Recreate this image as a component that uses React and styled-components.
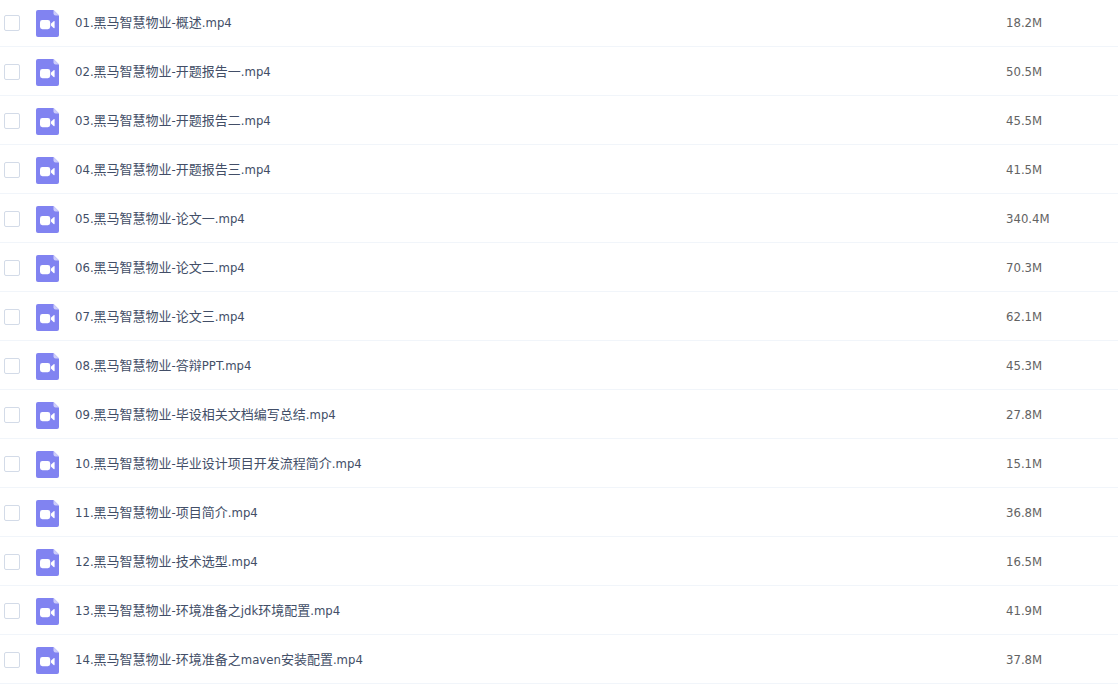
import React, { useState } from "react";
import styled, { createGlobalStyle } from "styled-components";

const GlobalStyle = createGlobalStyle`
  body {
    margin: 0;
    background: #ffffff;
    overflow-x: hidden;
    font-family: "DejaVu Sans Condensed", "Noto Sans CJK SC", sans-serif;
    font-size: 13px;
  }
`;

const Table = styled.table`
  width: 100%;
  margin-top: -2px;
  table-layout: fixed;
  border-collapse: separate;
  border-spacing: 0;
`;

const Cell = styled.td`
  box-sizing: border-box;
  width: ${(props) => props.$width || "auto"};
  height: 49px;
  padding: 2px 0 0;
  border-bottom: 1px solid #f1f5fa;
  line-height: 20px;
  vertical-align: middle;
`;

const SizeCell = styled(Cell)`
  color: #636363;
`;

const Checkbox = styled.input`
  display: block;
  appearance: none;
  box-sizing: border-box;
  width: 16px;
  height: 16px;
  margin: 0 0 0 4px;
  border: 1px solid #d3dbe8;
  border-radius: 2px;
  background: #ffffff;

  &:checked {
    border-color: #8183f1;
    background: #8183f1;
  }
`;

const FileLabel = styled.label`
  display: flex;
  align-items: center;
  gap: 16px;
  color: #424e67;
  white-space: nowrap;
`;

const Icon = styled.svg`
  flex: none;
  width: 23px;
  height: 27px;
  margin-top: 1px;
`;

const files = [
  { name: "01.黑马智慧物业-概述.mp4", size: "18.2M" },
  { name: "02.黑马智慧物业-开题报告一.mp4", size: "50.5M" },
  { name: "03.黑马智慧物业-开题报告二.mp4", size: "45.5M" },
  { name: "04.黑马智慧物业-开题报告三.mp4", size: "41.5M" },
  { name: "05.黑马智慧物业-论文一.mp4", size: "340.4M" },
  { name: "06.黑马智慧物业-论文二.mp4", size: "70.3M" },
  { name: "07.黑马智慧物业-论文三.mp4", size: "62.1M" },
  { name: "08.黑马智慧物业-答辩PPT.mp4", size: "45.3M" },
  { name: "09.黑马智慧物业-毕设相关文档编写总结.mp4", size: "27.8M" },
  { name: "10.黑马智慧物业-毕业设计项目开发流程简介.mp4", size: "15.1M" },
  { name: "11.黑马智慧物业-项目简介.mp4", size: "36.8M" },
  { name: "12.黑马智慧物业-技术选型.mp4", size: "16.5M" },
  { name: "13.黑马智慧物业-环境准备之jdk环境配置.mp4", size: "41.9M" },
  { name: "14.黑马智慧物业-环境准备之maven安装配置.mp4", size: "37.8M" },
];

const VideoIcon = () => (
  <Icon viewBox="0 0 23 27" aria-hidden="true">
    <path
      d="M2 0H17.5L23 5.5V25a2 2 0 0 1-2 2H2a2 2 0 0 1-2-2V2a2 2 0 0 1 2-2Z"
      fill="#8183f1"
    />
    <path d="M17.5 0L23 5.5H19.5a2 2 0 0 1-2-2Z" fill="#cdcdfa" />
    <rect x="4" y="10" width="10.2" height="9.2" rx="2.4" fill="#ffffff" />
    <path
      d="M14.9 13.8L17.6 11.2Q18.6 10.4 18.6 11.6V17.6Q18.6 18.8 17.6 18L14.9 15.4Z"
      fill="#ffffff"
    />
  </Icon>
);

const FileRow = ({ id, file, checked, onToggle }) => (
  <tr>
    <Cell $width="36px">
      <Checkbox id={id} type="checkbox" checked={checked} onChange={onToggle} />
    </Cell>
    <Cell>
      <FileLabel htmlFor={id}>
        <VideoIcon />
        {file.name}
      </FileLabel>
    </Cell>
    <SizeCell $width="112px">{file.size}</SizeCell>
  </tr>
);

const App = () => {
  const [selected, setSelected] = useState([]);

  const toggleFile = (name) => {
    setSelected(
      selected.includes(name)
        ? selected.filter((item) => item !== name)
        : [...selected, name]
    );
  };

  return (
    <>
      <GlobalStyle />
      <Table>
        <tbody>
          {files.map((file, index) => (
            <FileRow
              key={file.name}
              id={`file-${index}`}
              file={file}
              checked={selected.includes(file.name)}
              onToggle={() => toggleFile(file.name)}
            />
          ))}
        </tbody>
      </Table>
    </>
  );
};

export default App;
